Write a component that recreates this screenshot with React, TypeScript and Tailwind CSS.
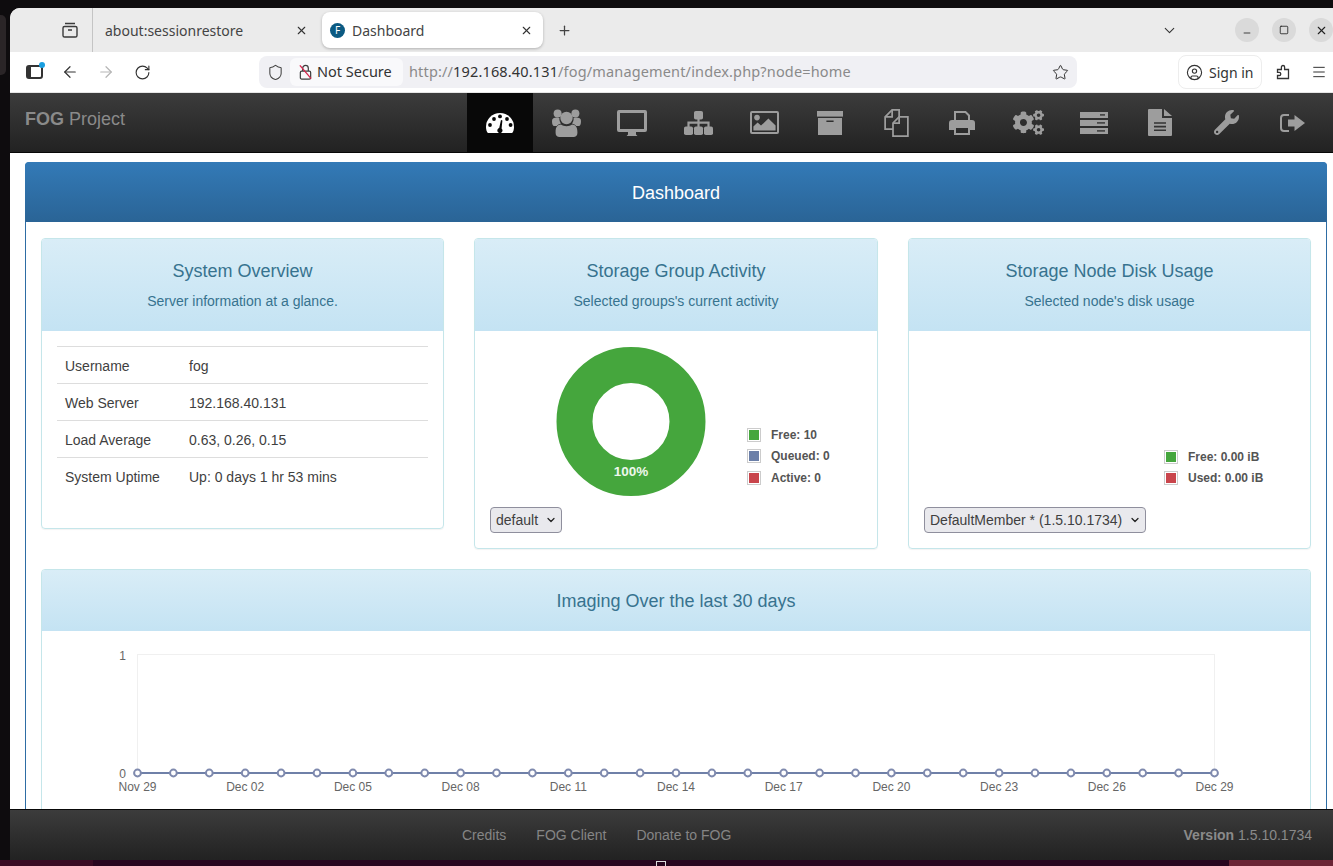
import React from "react";
import {
  ArrowLeft,
  ArrowRight,
  ChevronDown,
  CircleUser,
  Menu,
  Minus,
  Plus,
  RotateCw,
  Shield,
  Square,
  Star,
  X,
} from "lucide-react";
import { FaCogs, FaWrench } from "react-icons/fa";

const DARK = "#333";

const DashIcon = () => (
  <svg viewBox="0 0 28 20" className="w-[28px] h-[20px]">
    <path d="M14 0A14 14 0 0 1 28 14C28 16.5 27.4 18.6 26.2 20H1.8C.6 18.6 0 16.5 0 14A14 14 0 0 1 14 0Z" fill="#fff" />
    <circle cx="4" cy="12" r="1.9" fill="#080808" />
    <circle cx="8" cy="6" r="1.9" fill="#080808" />
    <circle cx="14" cy="3.4" r="1.9" fill="#080808" />
    <circle cx="21" cy="6" r="1.9" fill="#080808" />
    <circle cx="24.6" cy="12" r="1.9" fill="#080808" />
    <path d="M15 7L16.4 7.4L15.6 15.5A2.6 2.6 0 1 1 13.2 15Z" fill="#080808" />
  </svg>
);

const UsersIcon = () => (
  <svg viewBox="0 0 29 28" className="w-[29px] h-[28px]" fill="currentColor">
    <circle cx="5.6" cy="4.4" r="4" />
    <circle cx="23.4" cy="4.4" r="4" />
    <circle cx="14.5" cy="9" r="6.2" />
    <path d="M0 12C0 9.5 2 8.6 5 8.6C6 8.6 6.8 8.8 7.4 9C7.2 11.2 7.8 13 9 14.6C7 15.2 5.6 16 4.8 17H2.2C.8 17 0 15.6 0 12Z" />
    <path d="M29 12C29 9.5 27 8.6 24 8.6C23 8.6 22.2 8.8 21.6 9C21.8 11.2 21.2 13 20 14.6C22 15.2 23.4 16 24.2 17H26.8C28.2 17 29 15.6 29 12Z" />
    <path d="M9 15.6C10.4 16.6 12.4 17.2 14.5 17.2S18.6 16.6 20 15.6C23.6 16 25.4 18 25.4 23V24C25.4 26.6 23.8 28 21.4 28H7.6C5.2 28 3.6 26.6 3.6 24V23C3.6 18 5.4 16 9 15.6Z" />
  </svg>
);

const DesktopIcon = () => (
  <svg viewBox="0 0 30 26" className="w-[30px] h-[26px]" fill="currentColor">
    <path
      fillRule="evenodd"
      d="M2 0H28A2 2 0 0 1 30 2V20A2 2 0 0 1 28 22H2A2 2 0 0 1 0 20V2A2 2 0 0 1 2 0ZM3 3V19H27V3Z"
    />
    <path d="M11 22H19V24.5L20.5 26H9.5L11 24.5Z" />
  </svg>
);

const SitemapIcon = () => (
  <svg viewBox="0 0 29 24" className="w-[29px] h-[24px]" fill="currentColor">
    <rect x="10" y="0" width="9" height="8.5" rx="1.8" />
    <rect x="0" y="15.5" width="9" height="8.5" rx="1.8" />
    <rect x="10" y="15.5" width="9" height="8.5" rx="1.8" />
    <rect x="20" y="15.5" width="9" height="8.5" rx="1.8" />
    <path d="M13.4 8H15.6V10.6H25.6V16H23.4V12.8H15.6V16H13.4V12.8H5.6V16H3.4V10.6H13.4Z" />
  </svg>
);

const ImageIcon = () => (
  <svg viewBox="0 0 29 23" className="w-[29px] h-[23px]">
    <rect x="1" y="1" width="27" height="21" rx="1" fill="none" stroke="currentColor" strokeWidth="2" />
    <circle cx="7" cy="6.6" r="2.8" fill="currentColor" />
    <path d="M3.4 19.4V15.6L7.6 11.6L11 14.6L18.4 7.4L25.6 14.4V19.4Z" fill="currentColor" />
  </svg>
);

const ArchiveIcon = () => (
  <svg viewBox="0 0 26 24" className="w-[26px] h-[24px]" fill="currentColor">
    <rect x="0" y="0" width="26" height="5.6" />
    <path fillRule="evenodd" d="M1 7H25V24H1ZM9.4 9.6V11H16.6V9.6Z" />
  </svg>
);

const FilesIcon = () => (
  <svg viewBox="0 0 30 32" className="w-[27px] h-[28px]" fill="none" stroke="currentColor" strokeWidth="2">
    <path d="M18 9V1H10L2 9V23H11" />
    <path d="M10 1V9H2" />
    <path d="M28 9H18L11 16V31H28Z" />
    <path d="M18 9V16H11" />
  </svg>
);

const PrintIcon = () => (
  <svg viewBox="0 0 26 24" className="w-[26px] h-[24px]">
    <path d="M6 10V1H16.5L20 4.5V10" fill="none" stroke="currentColor" strokeWidth="2" />
    <path d="M3 9H23A3 3 0 0 1 26 12V19H21V15H5V19H0V12A3 3 0 0 1 3 9Z" fill="currentColor" />
    <path d="M6 16H20V23H6Z" fill="none" stroke="currentColor" strokeWidth="2" />
  </svg>
);

const ServerIcon = () => (
  <svg viewBox="0 0 28 22" className="w-[28px] h-[22px]" fill="currentColor">
    <rect x="0" y="0" width="28" height="6" />
    <rect x="0" y="8" width="28" height="6" />
    <rect x="0" y="16" width="28" height="6" />
    <rect x="20" y="2.2" width="5" height="1.4" fill={DARK} />
    <rect x="17" y="10.2" width="8" height="1.4" fill={DARK} />
    <rect x="17" y="18.2" width="8" height="1.4" fill={DARK} />
  </svg>
);

const FileIcon = () => (
  <svg viewBox="0 0 24 27" className="w-[24px] h-[27px]" fill="currentColor">
    <path d="M1 0H14V9H24V26A1 1 0 0 1 23 27H1A1 1 0 0 1 0 26V1A1 1 0 0 1 1 0Z" />
    <path d="M16 0L24 7H16Z" />
    <path d="M6 14H18M6 17.6H18M6 21.2H18" stroke={DARK} strokeWidth="1.6" />
  </svg>
);

const SignOutIcon = () => (
  <svg viewBox="0 0 25 18" className="w-[25px] h-[18px]">
    <path d="M9 1H4A3 3 0 0 0 1 4V14A3 3 0 0 0 4 17H9" fill="none" stroke="currentColor" strokeWidth="2" />
    <path d="M8 5.5H14.5V1L25 9L14.5 17V12.5H8Z" fill="currentColor" />
  </svg>
);

const TabsIcon = () => (
  <svg viewBox="0 0 18 18" className="w-[18px] h-[18px]" fill="none" stroke="#3a3a3a" strokeWidth="1.4">
    <path d="M4 2.5H14" />
    <rect x="2" y="5.5" width="14" height="10.5" rx="1.6" />
    <path d="M7 9H11" />
  </svg>
);

const LockOffIcon = () => (
  <svg viewBox="0 0 16 18" className="w-[15px] h-[18px]" fill="none" stroke="#3f3f3f" strokeWidth="1.3">
    <rect x="2.5" y="8" width="11" height="8.5" rx="1.4" />
    <path d="M5 8V5a3 3 0 0 1 6 0v3" />
    <path d="M2 2L14 16" stroke="#d7264d" strokeWidth="1.4" />
  </svg>
);

const PuzzleIcon = () => (
  <svg viewBox="0 0 16 16" className="w-[16px] h-[16px] ml-[13px]" fill="none" stroke="#333" strokeWidth="1.3">
    <path d="M8 1.5A1.6 1.6 0 0 1 9.6 3.1V5.5H13.5V14.5H2.5V11.5H4.2A1.6 1.6 0 0 0 4.2 8.3H2.5V5.5H6.4V3.1A1.6 1.6 0 0 1 8 1.5Z" />
  </svg>
);

const navItems = [
  { key: "home", icon: <DashIcon /> },
  { key: "users", icon: <UsersIcon /> },
  { key: "hosts", icon: <DesktopIcon /> },
  { key: "groups", icon: <SitemapIcon /> },
  { key: "images", icon: <ImageIcon /> },
  { key: "storage", icon: <ArchiveIcon /> },
  { key: "snapins", icon: <FilesIcon /> },
  { key: "printers", icon: <PrintIcon /> },
  { key: "settings", icon: <FaCogs className="w-[31px] h-[31px]" /> },
  { key: "tasks", icon: <ServerIcon /> },
  { key: "reports", icon: <FileIcon /> },
  { key: "about", icon: <FaWrench className="w-[25px] h-[25px]" /> },
  { key: "logout", icon: <SignOutIcon /> },
];

const overviewRows = [
  ["Username", "fog"],
  ["Web Server", "192.168.40.131"],
  ["Load Average", "0.63, 0.26, 0.15"],
  ["System Uptime", "Up: 0 days 1 hr 53 mins"],
];

const chartTicks = ["Nov 29", "Dec 02", "Dec 05", "Dec 08", "Dec 11", "Dec 14", "Dec 17", "Dec 20", "Dec 23", "Dec 26", "Dec 29"];

const CardHeader = ({ title, sub }: { title: string; sub: string }) => (
  <div className="h-[92px] pt-[21px] text-center text-[#37738f] bg-gradient-to-b from-[#d9edf7] to-[#c4e3f3] rounded-t-[3px]">
    <div className="text-[18px] leading-[22px]">{title}</div>
    <div className="text-[14px] leading-[20px] mt-[9px]">{sub}</div>
  </div>
);

const LegendItem = ({ color, label }: { color: string; label: string }) => (
  <div className="flex items-center h-[21.5px]">
    <span className="w-[14px] h-[14px] border border-[#ccc] p-px block">
      <span className="block w-full h-full" style={{ backgroundColor: color }} />
    </span>
    <span className="ml-[10px] text-[12px] font-bold text-[#545454]">{label}</span>
  </div>
);

const SelectBox = ({ value, width }: { value: string; width: string }) => (
  <div className={`relative ${width} h-[26px]`}>
    <select
      defaultValue={value}
      className="w-full h-full appearance-none bg-[#e9e9ed] border border-[#8f8f9d] rounded-[4px] pl-[5px] text-[14px] text-[#3f3f3f]"
    >
      <option>{value}</option>
    </select>
    <ChevronDown className="absolute right-[5px] top-[7px] w-[12px] h-[12px] text-[#222] pointer-events-none" strokeWidth={2.5} />
  </div>
);

const Chart = () => {
  const left = 95.5;
  const step = (1172.5 - 95.5) / 30;
  const points = Array.from({ length: 31 }, (_, i) => left + i * step);
  return (
    <svg width="1267" height="190" className="block">
      <rect x="95.5" y="23.5" width="1077" height="119" fill="none" stroke="#f0f0f0" />
      <line x1="95.5" x2="1172.5" y1="142" y2="142" stroke="#6f80a8" strokeWidth="2" />
      {points.map((x, i) => (
        <circle key={i} cx={x} cy="142" r="3.4" fill="#fff" stroke="#7f8aae" strokeWidth="2" />
      ))}
      <g fontSize="12" fill="#666" fontFamily="'Liberation Sans', Arial, sans-serif">
        <text x="84" y="29" textAnchor="end">1</text>
        <text x="84" y="147" textAnchor="end">0</text>
        {chartTicks.map((t, i) => (
          <text key={t} x={left + i * 3 * step} y="160" textAnchor="middle">{t}</text>
        ))}
      </g>
    </svg>
  );
};

export default function App() {
  return (
    <div className="w-[1333px] h-[866px] overflow-hidden flex flex-col bg-[#0e0c0e] font-['Liberation_Sans',Arial,sans-serif]">
      <div className="h-[8px] shrink-0" />
      <div className="flex flex-1 min-h-0">
        <div className="w-[10px] shrink-0 pt-[7px]">
          <div className="w-[6px] h-[60px] bg-[#2a2527] rounded-r-[5px]" />
        </div>

        <div className="flex-1 min-w-0 flex flex-col rounded-tl-[10px] overflow-hidden bg-white">
          {/* tab strip */}
          <div className="h-[44px] shrink-0 bg-[#ebebeb] flex items-center font-['Noto_Sans',sans-serif] text-[14px] text-[#444]">
            <div className="w-[83px] h-full shrink-0 border-r border-[#c4c4c4] flex items-center justify-end pr-[13px]">
              <TabsIcon />
            </div>
            <div className="w-[229px] shrink-0 flex items-center pl-[12px] pr-[14px] justify-between">
              <span>about:sessionrestore</span>
              <X className="w-[13px] h-[13px] text-[#333]" />
            </div>
            <div className="w-[221px] h-[36px] shrink-0 bg-white rounded-[8px] shadow-[0_1px_3px_rgba(0,0,0,0.25)] flex items-center pl-[8px] pr-[10px]">
              <span className="w-[15px] h-[15px] rounded-full bg-[#0b5a82] text-white text-[10px] flex items-center justify-center">F</span>
              <span className="ml-[7px]">Dashboard</span>
              <X className="w-[13px] h-[13px] text-[#333] ml-auto" />
            </div>
            <Plus className="w-[15px] h-[15px] ml-[14px] text-[#444]" />
            <ChevronDown className="w-[17px] h-[17px] ml-[589px] text-[#333]" strokeWidth={1.5} />
            <div className="ml-auto flex items-center gap-[13px]">
              <span className="w-[24px] h-[24px] rounded-full bg-[#dadada] flex items-center justify-center">
                <Minus className="w-[10px] h-[10px] mt-[6px] text-[#222]" strokeWidth={2} />
              </span>
              <span className="w-[24px] h-[24px] rounded-full bg-[#dadada] flex items-center justify-center">
                <Square className="w-[10px] h-[10px] text-[#222]" strokeWidth={2} />
              </span>
              <span className="w-[24px] h-[24px] rounded-full bg-[#dadada] flex items-center justify-center">
                <X className="w-[13px] h-[13px] text-[#222]" strokeWidth={2} />
              </span>
            </div>
          </div>

          {/* toolbar */}
          <div className="h-[41px] shrink-0 bg-white flex items-center font-['Noto_Sans',sans-serif] text-[14.5px] border-b border-[#e6e6e6]">
            <div className="relative ml-[16px] w-[17px] h-[14px] border-2 border-[#333] border-l-[5px] rounded-[3px]">
              <span className="absolute -right-[4px] -top-[5px] w-[6px] h-[6px] rounded-full bg-[#1a9fe0]" />
            </div>
            <ArrowLeft className="w-[18px] h-[18px] ml-[18px] text-[#333]" strokeWidth={1.6} />
            <ArrowRight className="w-[18px] h-[18px] ml-[18px] text-[#b5b5b5]" strokeWidth={1.6} />
            <RotateCw className="w-[17px] h-[17px] ml-[19px] text-[#333]" strokeWidth={1.6} />
            <div className="ml-[108px] w-[818px] h-[32px] bg-[#f0f0f4] rounded-[8px] flex items-center">
              <Shield className="w-[17px] h-[17px] ml-[8px] text-[#444]" strokeWidth={1.5} />
              <div className="ml-[6px] w-[113px] h-[28px] bg-[#f9f9fb] rounded-[6px] flex items-center pl-[8px]">
                <LockOffIcon />
                <span className="ml-[4px] text-[#333]">Not Secure</span>
              </div>
              <span className="ml-[6px] text-[#8a8a8a] tracking-[0.15px] whitespace-nowrap">
                http://<span className="text-[#333]">192.168.40.131</span>/fog/management/index.php?node=home
              </span>
              <Star className="w-[17px] h-[17px] ml-auto mr-[8px] text-[#333]" strokeWidth={1.4} />
            </div>
            <div className="ml-[101px] w-[84px] h-[34px] border border-[#ededed] rounded-[8px] flex items-center pl-[7px] gap-[6px] text-[14px] text-[#333]">
              <CircleUser className="w-[17px] h-[17px]" strokeWidth={1.6} />
              <span>Sign in</span>
            </div>
            <PuzzleIcon />
            <Menu className="w-[16px] h-[16px] ml-[20px] text-[#333]" strokeWidth={1.5} />
          </div>

          {/* fog navbar */}
          <div className="h-[60px] shrink-0 bg-gradient-to-b from-[#3c3c3c] to-[#222] border-b border-[#080808] flex items-stretch pr-[8px]">
            <div className="pl-[15px] flex items-center text-[18px] text-[#8a8a8a] pb-[6px]">
              <span className="font-bold">FOG</span>
              <span className="ml-[5px]">Project</span>
            </div>
            <div className="ml-auto flex">
              {navItems.map((item, i) => (
                <div
                  key={item.key}
                  className={
                    i === 0
                      ? "w-[66px] flex items-center justify-center bg-[#080808] text-white"
                      : "w-[66px] flex items-center justify-center text-[#9d9d9d]"
                  }
                >
                  {item.icon}
                </div>
              ))}
            </div>
          </div>

          {/* page content */}
          <div className="flex-1 min-h-0 overflow-hidden bg-white pt-[9px] pl-[15px] pr-[6px]">
            <div className="border border-[#2e6da4] rounded-[4px]">
              <div className="h-[60px] -m-px mb-0 pt-[2px] bg-gradient-to-b from-[#337ab7] to-[#2a6496] rounded-t-[4px] flex items-center justify-center text-white text-[18px]">
                Dashboard
              </div>
              <div className="px-[15px] pt-[16px]">
                <div className="grid grid-cols-[403px_404px_1fr] gap-[30px] items-start">
                  <div className="border border-[#c5e6ea] rounded-[4px] shadow-[0_1px_1px_rgba(0,0,0,0.05)]">
                    <CardHeader title="System Overview" sub="Server information at a glance." />
                    <div className="px-[15px] pt-[15px] pb-[34px] text-[14px] text-[#3f3f3f]">
                      {overviewRows.map(([label, value]) => (
                        <div key={label} className="h-[37px] pt-[2px] border-t border-[#ddd] flex items-center">
                          <span className="w-[124px] pl-[8px]">{label}</span>
                          <span className="pl-[8px]">{value}</span>
                        </div>
                      ))}
                    </div>
                  </div>

                  <div className="border border-[#c5e6ea] rounded-[4px] shadow-[0_1px_1px_rgba(0,0,0,0.05)]">
                    <CardHeader title="Storage Group Activity" sub="Selected groups's current activity" />
                    <div className="px-[15px] pt-[15px] pb-[15px]">
                      <div className="flex h-[150px] pl-[66px]">
                        <svg width="150" height="150" viewBox="0 0 150 150" className="block shrink-0">
                          <circle cx="75" cy="75.5" r="56.5" fill="none" stroke="#45a63d" strokeWidth="36" />
                          <text x="75" y="130" textAnchor="middle" fontSize="13.5" fontWeight="bold" fill="#eef7ec" fontFamily="'Liberation Sans', Arial, sans-serif">
                            100%
                          </text>
                        </svg>
                        <div className="ml-[41px] mt-[78px]">
                          <LegendItem color="#45a63d" label="Free: 10" />
                          <LegendItem color="#6b7fa8" label="Queued: 0" />
                          <LegendItem color="#c9454c" label="Active: 0" />
                        </div>
                      </div>
                      <div className="mt-[11px]">
                        <SelectBox value="default" width="w-[72px]" />
                      </div>
                    </div>
                  </div>

                  <div className="border border-[#c5e6ea] rounded-[4px] shadow-[0_1px_1px_rgba(0,0,0,0.05)]">
                    <CardHeader title="Storage Node Disk Usage" sub="Selected node's disk usage" />
                    <div className="px-[15px] pt-[15px] pb-[15px]">
                      <div className="h-[150px] pl-[240px] pt-[100px]">
                        <LegendItem color="#45a63d" label="Free: 0.00 iB" />
                        <LegendItem color="#c9454c" label="Used: 0.00 iB" />
                      </div>
                      <div className="mt-[11px]">
                        <SelectBox value="DefaultMember * (1.5.10.1734)" width="w-[222px]" />
                      </div>
                    </div>
                  </div>
                </div>

                <div className="mt-[20px] border border-[#c5e6ea] rounded-[4px]">
                  <div className="h-[61px] pt-[2px] flex items-center justify-center text-[18px] text-[#37738f] bg-gradient-to-b from-[#d9edf7] to-[#c4e3f3] rounded-t-[3px]">
                    Imaging Over the last 30 days
                  </div>
                  <Chart />
                </div>
              </div>
            </div>
          </div>

          {/* footer */}
          <div className="h-[51px] shrink-0 bg-gradient-to-b from-[#3c3c3c] to-[#222] border-t border-[#080808] flex items-center text-[14px] text-[#858585] pl-[452px] pr-[21px]">
            <span>Credits</span>
            <span className="ml-[30px]">FOG Client</span>
            <span className="ml-[30px]">Donate to FOG</span>
            <span className="ml-auto text-[#8a8a8a]">
              <span className="font-bold">Version</span> 1.5.10.1734
            </span>
          </div>
        </div>
      </div>

      {/* desktop strip */}
      <div className="h-[6px] shrink-0 flex bg-[#28061f]">
        <div className="w-[93px] bg-[#3a0c24]" />
        <div className="flex-1 flex justify-center">
          <span className="w-[10px] h-[5px] mt-px border border-b-0 border-[#ddd]" />
        </div>
        <div className="w-[104px] bg-[#6a2535]" />
      </div>
    </div>
  );
}
